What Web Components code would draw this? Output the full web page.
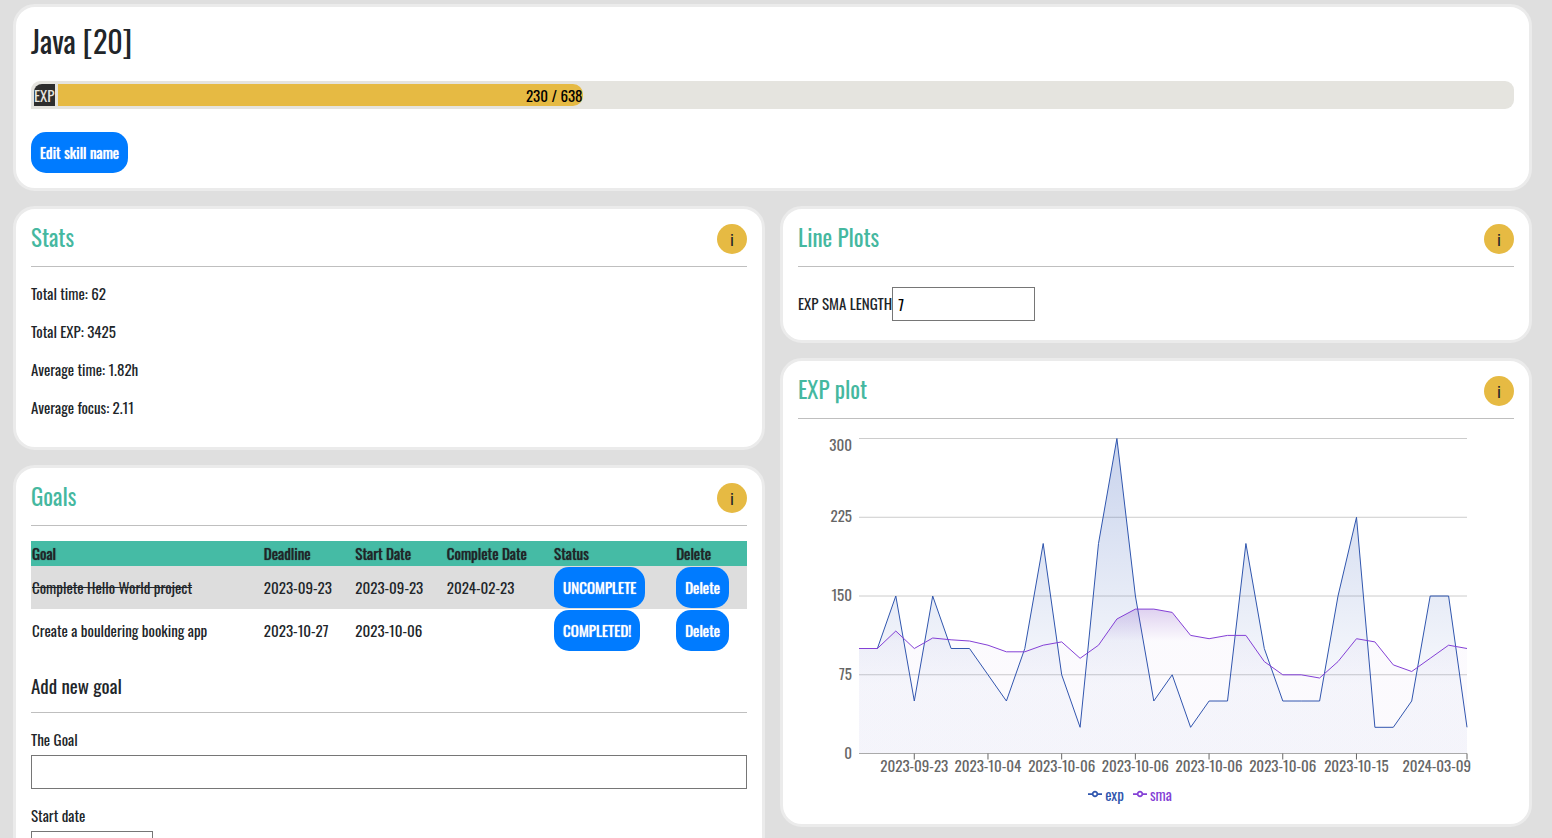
<!DOCTYPE html>
<html lang="en">
<head>
<meta charset="utf-8">
<meta name="viewport" content="width=device-width, initial-scale=1">
<title>Java skill</title>
<style>
  body { margin: 0; background: #dfdfdf; color: #212529; font: 400 15px/22px Oswald, "Roboto Condensed", "Liberation Sans", sans-serif; }
</style>
</head>
<body>
<skill-page></skill-page>

<script>
class SkillCard extends HTMLElement {
  connectedCallback() {
    this.attachShadow({ mode: 'open' }).innerHTML = `
      <style>
        :host { display: block; box-sizing: border-box; background: #fff; border: 3px solid #ebebeb; border-radius: 22px; padding: 15px; }
        header { display: flex; justify-content: space-between; align-items: flex-start; height: 30px; padding-bottom: 12px; border-bottom: 1px solid #bfbfbf; }
        h2 { margin: 0; font-size: 23px; line-height: 27px; font-weight: 400; color: #45b8a0; }
        button { width: 30px; height: 30px; padding: 0; border: 0; border-radius: 50%; background: #e6ba43; color: #212529; font: inherit; line-height: 30px; text-align: center; }
      </style>
      ${this.hasAttribute('heading') ? `<header><h2>${this.getAttribute('heading')}</h2><button type="button" aria-label="Info">i</button></header>` : ''}
      <slot></slot>`;
  }
}

class SkillButton extends HTMLElement {
  connectedCallback() {
    this.attachShadow({ mode: 'open' }).innerHTML = `
      <style>
        :host { display: inline-block; vertical-align: top; }
        button { display: block; height: 41px; padding: 0 9px; border: 0; border-radius: 15px; background: #007bff; color: #fff; font: inherit; text-shadow: 0 0 1px currentColor; line-height: 41px; white-space: nowrap; }
      </style>
      <button type="button"><slot></slot></button>`;
  }
}

class ExpBar extends HTMLElement {
  connectedCallback() {
    const value = Number(this.getAttribute('value'));
    const max = Number(this.getAttribute('max'));
    this.attachShadow({ mode: 'open' }).innerHTML = `
      <style>
        :host { display: flex; gap: 3px; box-sizing: border-box; height: 28px; padding: 3px 0 3px 3px; background: #e5e4df; border-radius: 9px 9px 9px 0; color: #000; line-height: 23px; }
        .tag { background: #2e2e2e; color: #e5e4df; border-top-left-radius: 8px; height: 22px; }
        .track { flex: 1; }
        .fill { height: 22px; background: #e6ba43; border-radius: 0 10px 10px 0; text-align: right; white-space: nowrap; }
      </style>
      <span class="tag">EXP</span>
      <div class="track"><div class="fill" style="width:${value / max * 100}%">${value} / ${max}</div></div>`;
  }
}

class SkillStats extends HTMLElement {
  connectedCallback() {
    this.attachShadow({ mode: 'open' }).innerHTML = `
      <style>
        :host { display: block; padding: 15px 0 14px; }
        p { margin: 0 0 16px; }
        p:last-child { margin: 0; }
      </style>
      <p>Total time: 62</p><p>Total EXP: 3425</p><p>Average time: 1.82h</p><p>Average focus: 2.11</p>`;
  }
}

class SmaField extends HTMLElement {
  connectedCallback() {
    this.attachShadow({ mode: 'open' }).innerHTML = `
      <style>
        :host { display: flex; align-items: center; padding: 20px 0 4px; }
        label { padding-bottom: 2px; }
        input { box-sizing: border-box; width: 143px; height: 34px; margin: 0; padding: 1px 5px; border: 1px solid #767676; background: #fff; color: #000; font: inherit; }
      </style>
      <label for="len">EXP SMA LENGTH</label><input id="len" type="text" inputmode="numeric" value="7">`;
  }
}

class GoalTable extends HTMLElement {
  connectedCallback() {
    this.attachShadow({ mode: 'open' }).innerHTML = `
      <style>
        :host { display: block; padding-top: 15px; line-height: 23px; }
        table { width: 100%; border-collapse: collapse; }
        th, td { padding: 1px; text-align: left; white-space: nowrap; }
        th { font-weight: 400; text-shadow: 0 0 1px currentColor; }
        thead tr { background: #45bba5; }
        .done { background: #ddd; }
        .done td:first-child { text-decoration: line-through; }
      </style>
      <table>
        <thead><tr><th>Goal</th><th>Deadline</th><th>Start Date</th><th>Complete Date</th><th>Status</th><th>Delete</th></tr></thead>
        <tbody>
          <tr class="done"><td>Complete Hello World project</td><td>2023-09-23</td><td>2023-09-23</td><td>2024-02-23</td><td><skill-button>UNCOMPLETE</skill-button></td><td><skill-button>Delete</skill-button></td></tr>
          <tr><td>Create a bouldering booking app</td><td>2023-10-27</td><td>2023-10-06</td><td></td><td><skill-button>COMPLETED!</skill-button></td><td><skill-button>Delete</skill-button></td></tr>
        </tbody>
      </table>`;
  }
}

class GoalForm extends HTMLElement {
  connectedCallback() {
    this.attachShadow({ mode: 'open' }).innerHTML = `
      <style>
        :host { display: block; padding-top: 20px; }
        h3 { margin: 0 0 15px; padding-bottom: 13px; border-bottom: 1px solid #bfbfbf; font-size: 19px; line-height: 27px; font-weight: 400; }
        label { display: block; padding-bottom: 5px; }
        input { display: block; box-sizing: border-box; height: 34px; margin: 0 0 15px; padding: 1px 5px; border: 1px solid #767676; background: #fff; color: #000; font: inherit; }
        #goal { width: 100%; }
        #start { width: 122px; }
      </style>
      <h3>Add new goal</h3>
      <label for="goal">The Goal</label><input id="goal" type="text">
      <label for="start">Start date</label><input id="start" type="text">`;
  }
}

class ExpChart extends HTMLElement {
  static exp = [100, 100, 150, 50, 150, 100, 100, 75, 50, 100, 200, 75, 25, 200, 300, 150, 50, 75, 25, 50, 50, 200, 100, 50, 50, 50, 150, 225, 25, 25, 50, 150, 150, 25];
  static ticks = [[3, '2023-09-23'], [7, '2023-10-04'], [11, '2023-10-06'], [15, '2023-10-06'], [19, '2023-10-06'], [23, '2023-10-06'], [27, '2023-10-15'], [33, '2024-03-09']];

  connectedCallback() {
    const marker = `<svg width="14" height="14" viewBox="0 0 32 32" fill="none" stroke="currentColor" stroke-width="4" aria-hidden="true"><path d="M0 16h10.67A5.33 5.33 0 1 1 21.33 16H32M21.33 16A5.33 5.33 0 1 1 10.67 16"/></svg>`;
    this.attachShadow({ mode: 'open' }).innerHTML = `
      <style>
        :host { display: block; padding-top: 10px; }
        .plot { display: block; width: 100%; height: 350px; overflow: visible; }
        text { font-size: 15px; fill: #666; }
        .legend { display: flex; justify-content: center; gap: 9px; padding: 4px 52px 4px 0; }
        .legend span { display: flex; align-items: center; gap: 3px; }
        .exp { color: #3056ae; }
        .sma { color: #8440d6; }
      </style>
      <svg class="plot" role="img" aria-label="EXP plot"></svg>
      <div class="legend"><span class="exp">${marker}exp</span><span class="sma">${marker}sma</span></div>`;
    this.plot = this.shadowRoot.querySelector('.plot');
    this.draw();
    new ResizeObserver(() => this.draw()).observe(this);
  }

  draw() {
    const left = 61, right = this.clientWidth - 47, top = 9.5, bottom = 324.5;
    const exp = ExpChart.exp;
    const sma = exp.map((_, i) => {
      const part = exp.slice(Math.max(0, i - 7), i + 1);
      return part.reduce((a, b) => a + b, 0) / part.length;
    });
    const x = i => left + (right - left) * i / (exp.length - 1);
    const y = v => bottom - (bottom - top) * v / 300;
    const line = data => data.map((v, i) => `${i ? 'L' : 'M'}${x(i).toFixed(1)} ${y(v).toFixed(1)}`).join('');
    const area = data => `${line(data)}L${right} ${bottom}L${left} ${bottom}Z`;
    this.plot.innerHTML = `
      <defs>
        <linearGradient id="ge" x1="0" y1="0" x2="0" y2="1"><stop offset="5%" stop-color="#3058b8" stop-opacity=".25"/><stop offset="78%" stop-color="#3058b8" stop-opacity=".035"/></linearGradient>
        <linearGradient id="gs" x1="0" y1="0" x2="0" y2="1"><stop offset="0%" stop-color="#7840c0" stop-opacity=".24"/><stop offset="22%" stop-color="#7840c0" stop-opacity=".025"/></linearGradient>
      </defs>
      ${[300, 225, 150, 75, 0].map(v => `<path d="M${left} ${y(v)}H${right}" stroke="#ccc"/>
        <text x="54" y="${v === 300 ? 22 : Math.round(y(v)) + 5}" text-anchor="end">${v}</text>`).join('')}
      <path d="${area(exp)}" fill="url(#ge)"/><path d="${line(exp)}" fill="none" stroke="#3056ae"/>
      <path d="${area(sma)}" fill="url(#gs)"/><path d="${line(sma)}" fill="none" stroke="#8440d6"/>
      <path d="M${left} ${bottom}H${right}" stroke="#aaa"/>
      ${ExpChart.ticks.map(([i, t]) => `<path d="M${x(i)} ${bottom}v6" stroke="#666"/>
        <text x="${i === 33 ? right + 4 : x(i)}" y="343" text-anchor="${i === 33 ? 'end' : 'middle'}">${t}</text>`).join('')}`;
  }
}

class SkillPage extends HTMLElement {
  connectedCallback() {
    this.attachShadow({ mode: 'open' }).innerHTML = `
      <style>
        :host { display: block; box-sizing: border-box; height: 100vh; overflow-y: auto; scrollbar-width: none; padding: 4px 20px 15px 13px; }
        h1 { margin: 0 0 22px; font-size: 30px; line-height: 37px; font-weight: 400; }
        exp-bar { margin-bottom: 23px; }
        .columns { display: grid; grid-template-columns: minmax(0, 1fr) minmax(0, 1fr); gap: 15px; align-items: start; margin-top: 15px; }
        .column { display: grid; gap: 15px; }
      </style>
      <skill-card>
        <h1>Java [20]</h1>
        <exp-bar value="230" max="638"></exp-bar>
        <skill-button>Edit skill name</skill-button>
      </skill-card>
      <div class="columns">
        <div class="column">
          <skill-card heading="Stats"><skill-stats></skill-stats></skill-card>
          <skill-card heading="Goals"><goal-table></goal-table><goal-form></goal-form></skill-card>
        </div>
        <div class="column">
          <skill-card heading="Line Plots"><sma-field></sma-field></skill-card>
          <skill-card heading="EXP plot"><exp-chart></exp-chart></skill-card>
        </div>
      </div>`;
  }
}

customElements.define('skill-card', SkillCard);
customElements.define('skill-button', SkillButton);
customElements.define('exp-bar', ExpBar);
customElements.define('skill-stats', SkillStats);
customElements.define('sma-field', SmaField);
customElements.define('goal-table', GoalTable);
customElements.define('goal-form', GoalForm);
customElements.define('exp-chart', ExpChart);
customElements.define('skill-page', SkillPage);
</script>
</body>
</html>
